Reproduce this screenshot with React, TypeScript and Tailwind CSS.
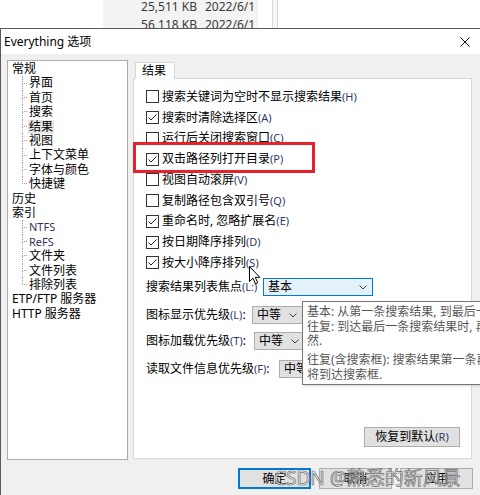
import React from 'react';

const checks: [string, string, boolean][] = [
  ['搜索关键词为空时不显示搜索结果', 'H', false],
  ['搜索时清除选择区', 'A', true],
  ['运行后关闭搜索窗口', 'C', false],
  ['双击路径列打开目录', 'P', true],
  ['视图自动滚屏', 'V', false],
  ['复制路径包含双引号', 'Q', false],
  ['重命名时, 忽略扩展名', 'E', true],
  ['按日期降序排列', 'D', true],
  ['按大小降序排列', 'S', true],
];

const generalItems = ['界面', '首页', '搜索', '结果', '视图', '上下文菜单', '字体与颜色', '快捷键'];
const indexItems = ['NTFS', 'ReFS', '文件夹', '文件列表', '排除列表'];

function Key({ k }: { k: string }) {
  return <span className="text-[11px] text-[#2f3a66] [font-family:'Noto_Sans',sans-serif]">({k})</span>;
}

function CheckBox({ checked }: { checked: boolean }) {
  return (
    <span className="flex h-[13px] w-[13px] shrink-0 items-center justify-center border border-[#333] bg-white">
      {checked && (
        <svg width="11" height="11" viewBox="0 0 11 11">
          <path d="M1.5 5.5 L4 8 L9.5 2.5" fill="none" stroke="#222" strokeWidth="1" />
        </svg>
      )}
    </span>
  );
}

function TreeChild({ label, last, selected, latin }: { label: string; last: boolean; selected?: boolean; latin?: boolean }) {
  return (
    <div className="flex h-[14.4px] items-stretch">
      <div className="ml-[14px] flex w-[5px] flex-col">
        <div className="h-1/2 border-b border-l border-dotted border-[#a0a0a0]" />
        <div className={last ? 'h-1/2' : 'h-1/2 border-l border-dotted border-[#a0a0a0]'} />
      </div>
      <span
        className={
          'ml-[1px] flex items-center px-[1px] ' +
          (selected ? 'bg-[#e6e6e6] ' : '') +
          (latin ? "text-[11px] text-[#3a2d5e] [font-family:'Noto_Sans',sans-serif]" : '')
        }
      >
        {label}
      </span>
    </div>
  );
}

function Chevron() {
  return (
    <svg width="8" height="5" viewBox="0 0 8 5">
      <path d="M0.5 0.5 L4 4 L7.5 0.5" fill="none" stroke="#444" strokeWidth="1" />
    </svg>
  );
}

function Select({ value, width, focus }: { value: string; width: string; focus?: boolean }) {
  return (
    <div
      className={
        'flex h-[18px] items-center justify-between pl-[4px] pr-[5px] ' +
        width +
        (focus ? ' border border-[#0078d7] bg-[#e5f1fb]' : ' border border-[#adadad] bg-[#e1e1e1]')
      }
    >
      <span>{value}</span>
      <Chevron />
    </div>
  );
}

export default function App() {
  return (
    <div className="relative h-[495px] w-[480px] overflow-hidden bg-white text-[12px] text-black [font-family:'Noto_Sans','Noto_Sans_CJK_SC',sans-serif]">
      {/* window behind the dialog */}
      <div className="flex h-[28px]">
        <div className="w-[103px]" />
        <div className="w-[155px] overflow-hidden bg-[#f3f3f3] text-[#3a3a3a]">
          <div className="-mt-[2px] flex flex-col">
            {['25,511 KB', '56,118 KB'].map((s) => (
              <div key={s} className="flex h-[18px] items-center whitespace-nowrap">
                <span className="w-[94px] text-right">{s}</span>
                <span className="ml-[8px]">2022/6/1</span>
              </div>
            ))}
          </div>
        </div>
        <div className="w-[14px]" />
        <div className="w-[6px] border-x border-[#d8d8d8] bg-[#f7f7f7]" />
      </div>

      {/* dialog */}
      <div className="flex h-[467px] flex-col border-l border-t border-[#5a5a5a]">
        <div className="flex h-[25px] items-center justify-between bg-white pl-[3px] pr-[10px]">
          <span>Everything 选项</span>
          <svg width="10" height="10" viewBox="0 0 10 10">
            <path d="M0.5 0.5 L9.5 9.5 M9.5 0.5 L0.5 9.5" stroke="#111" strokeWidth="1" />
          </svg>
        </div>

        <div className="flex flex-1 items-start bg-[#f0f0f0]">
          {/* tree */}
          <div className="ml-[6px] mt-[6px] h-[400px] w-[121px] border border-[#acacac] bg-white pt-[1px] leading-[14.4px]">
            <div className="pl-[4px]">常规</div>
            {generalItems.map((g, i) => (
              <TreeChild key={g} label={g} last={i === generalItems.length - 1} selected={g === '结果'} />
            ))}
            <div className="pl-[4px]">历史</div>
            <div className="pl-[4px]">索引</div>
            {indexItems.map((g, i) => (
              <TreeChild key={g} label={g} last={i === indexItems.length - 1} latin={i < 2} />
            ))}
            <div className="pl-[4px]">ETP/FTP 服务器</div>
            <div className="pl-[4px]">HTTP 服务器</div>
          </div>

          {/* tab + page */}
          <div className="ml-[5px] mt-[8px] flex flex-col">
            <div className="relative z-10 -mb-px ml-[2px] flex h-[17px] w-[40px] items-center border border-b-0 border-[#d9d9d9] bg-white pl-[6px]">
              结果
            </div>
            <div className="flex h-[381px] w-[339px] flex-col border border-[#d9d9d9] bg-white pl-[12px] pt-[7.5px]">
              {checks.map(([t, k, c]) => (
                <div key={t} className="flex h-[20.75px] items-center gap-[3px]">
                  <CheckBox checked={c} />
                  <span className="whitespace-nowrap">
                    {t}
                    <Key k={k} />
                  </span>
                </div>
              ))}

              <div className="mt-[5px] flex h-[18px] items-center">
                <span className="w-[117px] whitespace-nowrap">
                  搜索结果列表焦点<Key k="L:" />
                </span>
                <Select value="基本" width="w-[110px]" focus />
              </div>
              <div className="mt-[10px] flex h-[18px] items-center">
                <span className="w-[106px] whitespace-nowrap">
                  图标显示优先级<Key k="L" />:
                </span>
                <Select value="中等" width="w-[51px]" />
              </div>
              <div className="mt-[8px] flex h-[18px] items-center">
                <span className="w-[108px] whitespace-nowrap">
                  图标加载优先级<Key k="T" />:
                </span>
                <Select value="中等" width="w-[51px]" />
              </div>
              <div className="mt-[10px] flex h-[18px] items-center">
                <span className="w-[133px] whitespace-nowrap">
                  读取文件信息优先级<Key k="F" />:
                </span>
                <Select value="中等" width="w-[51px]" />
              </div>

              <button className="mb-[11px] mr-[11px] mt-auto flex h-[20px] w-[96px] items-center justify-center self-end border border-[#adadad] bg-[#e1e1e1]">
                恢复到默认<Key k="R" />
              </button>
            </div>

            <div className="ml-[105px] mt-[9px] flex gap-[8px]">
              <button className="h-[21px] w-[73px] border-2 border-[#0078d7] bg-[#e1e1e1]">确定</button>
              <button className="h-[21px] w-[73px] border border-[#adadad] bg-[#e1e1e1]">取消</button>
              <button className="h-[21px] w-[73px] border border-[#adadad] bg-[#e1e1e1]">应用</button>
            </div>
          </div>
        </div>
      </div>

      {/* tooltip */}
      <div className="absolute left-[302px] top-[301px] h-[84px] w-[250px] whitespace-nowrap border border-[#767676] bg-white pl-[4px] pt-[3px] leading-[14.5px] text-[#575757] shadow-[1px_1px_2px_rgba(0,0,0,0.15)]">
        <div>基本: 从第一条搜索结果, 到最后一条搜索结果.</div>
        <div>往复: 到达最后一条搜索结果时, 再返回第一条, 反之亦</div>
        <div>然.</div>
        <div className="mt-[4.5px]">往复(含搜索框): 搜索结果第一条再往上时</div>
        <div>将到达搜索框.</div>
      </div>

      {/* highlight */}
      <div className="absolute left-[133px] top-[142px] h-[31px] w-[182px] border-[3px] border-[#e8202a]" />

      {/* mouse cursor */}
      <svg className="absolute left-[249px] top-[266px]" width="12" height="19" viewBox="0 0 12 19">
        <path d="M0.5 0.5 L0.5 15.5 L4 12.2 L6.5 17.8 L8.7 16.8 L6.3 11.3 L10.8 11.3 Z" fill="#fff" stroke="#000" strokeWidth="1" />
      </svg>

      {/* watermark */}
      <div className="absolute left-[274px] top-[464px] whitespace-nowrap text-[19px] text-white/50 [-webkit-text-stroke:0.7px_#707070]">
        CSDN @熟悉的新风景
      </div>
    </div>
  );
}
